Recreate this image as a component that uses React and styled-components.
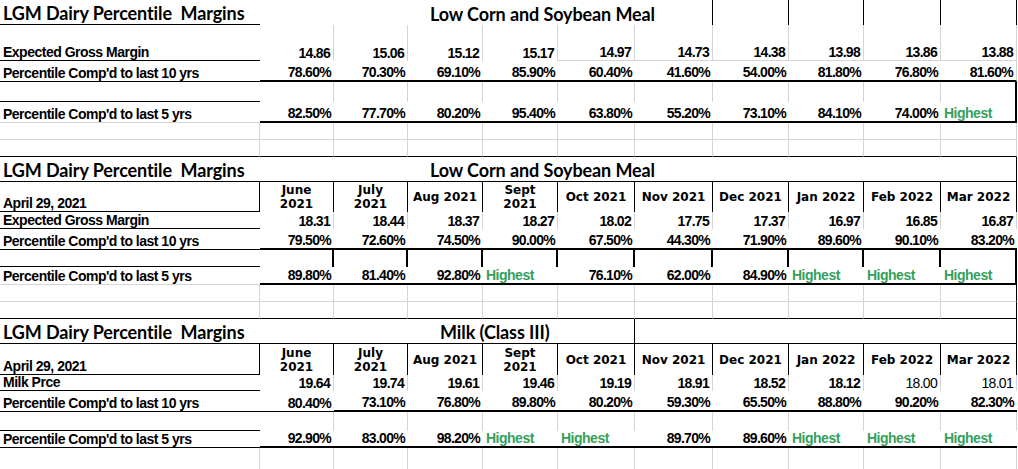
import React from 'react';
import styled, { createGlobalStyle } from 'styled-components';

// column widths of the worksheet, label column first
const COLS = [260, 74, 74, 75, 75, 77, 78, 76, 75, 77, 76];

const LINES = {
  g: '1px solid #d4d4d4',
  b: '1px solid #000',
  B: '2px solid #000',
  n: '0',
};

const TITLE = 'LGM Dairy Percentile\u00a0\u00a0Margins';
const P10 = "Percentile Comp'd to last 10 yrs";
const P5 = "Percentile Comp'd to last 5 yrs";

const title = (v) => ({ t: 'title', v });
const banner = (v, span, indent) => ({ t: 'banner', v, span, indent });
const month = (...lines) => ({ t: 'month', lines });
const light = (v) => ({ t: 'num', v, light: true });
const H = { t: 'high' };

const HEADER = [
  'April 29, 2021',
  month('June', '2021'),
  month('July', '2021'),
  month('Aug 2021'),
  month('Sept', '2021'),
  month('Oct 2021'),
  month('Nov 2021'),
  month('Dec 2021'),
  month('Jan 2022'),
  month('Feb 2022'),
  month('Mar 2022'),
];

const EMPTY = ['', '', '', '', '', '', '', '', '', '', ''];

const sections = [
  [
    { h: 25, r: 'nnnnnnbbbbb', b: 'bnnnnnnnnnn', cells: [title(TITLE), banner('Low Corn and Soybean Meal', 6, 167), '', '', '', ''] },
    { h: 36, r: 'ngggggggggg', b: 'bnnnngggggg', cells: ['Expected Gross Margin', '14.86', '15.06', '15.12', '15.17', '14.97', '14.73', '14.38', '13.98', '13.86', '13.88'] },
    { h: 21, r: 'nnnnnnnnnng', b: 'bBBBBBBBBBB', cells: [P10, '78.60%', '70.30%', '69.10%', '85.90%', '60.40%', '41.60%', '54.00%', '81.80%', '76.80%', '81.60%'] },
    { h: 20, r: 'ngggggggggB', b: 'bnnnnnnnnnn', cells: EMPTY },
    { h: 21, r: 'nnnnnnnnnnB', b: 'gBBBBBBBBBB', cells: [P5, '82.50%', '77.70%', '80.20%', '95.40%', '63.80%', '55.20%', '73.10%', '84.10%', '74.00%', H] },
    { h: 17, r: 'ggggggggggg', b: 'ggggggggggg', cells: EMPTY },
    { h: 17, r: 'ggggggggggg', b: 'bbbbbbbbbbb', cells: EMPTY },
  ],
  [
    { h: 25, r: 'nnnnnnnnnnb', b: 'bbbbbbbbbbb', cells: [title(TITLE), banner('Low Corn and Soybean Meal', 6, 167), '', '', '', ''] },
    { h: 30, r: 'bbbbbbbbbbb', b: 'bnnnnnnnnnn', cells: HEADER },
    { h: 17, r: 'ngggggggggg', b: 'bnnnnnnnnnn', cells: ['Expected Gross Margin', '18.31', '18.44', '18.37', '18.27', '18.02', '17.75', '17.37', '16.97', '16.85', '16.87'] },
    { h: 21, r: 'nnnnnnnnnnn', b: 'bBBBBBBBBBB', cells: [P10, '79.50%', '72.60%', '74.50%', '90.00%', '67.50%', '44.30%', '71.90%', '89.60%', '90.10%', '83.20%'] },
    { h: 17, r: 'nBBBBBBBBBB', b: 'bnnnnnnnnnn', cells: EMPTY },
    { h: 18, r: 'nnnnnnnnnnB', b: 'gBBBBBBBBBB', cells: [P5, '89.80%', '81.40%', '92.80%', H, '76.10%', '62.00%', '84.90%', H, H, H] },
    { h: 17, r: 'ggggggggggb', b: 'ggggggggggg', cells: EMPTY },
    { h: 17, r: 'ggggggggggb', b: 'bbbbbbbbbbb', cells: EMPTY },
  ],
  [
    { h: 25, r: 'nnnnnbnnnnb', b: 'bbbbbbbbbbb', cells: [title(TITLE), banner('Milk (Class III)', 5, 177), '', '', '', '', ''] },
    { h: 31, r: 'bbbbbbbbbbb', b: 'bnnnnnnnnnn', cells: HEADER },
    { h: 16, r: 'ngggggggggg', b: 'bnnnnnnnnnn', cells: ['Milk Prce', '19.64', '19.74', '19.61', '19.46', '19.19', '18.91', '18.52', '18.12', light('18.00'), light('18.01')] },
    { h: 21, r: 'nnnnnnnnnnn', b: 'bbBBBBBBBBB', cells: [P10, '80.40%', '73.10%', '76.80%', '89.80%', '80.20%', '59.30%', '65.50%', '88.80%', '90.20%', '82.30%'] },
    { h: 19, r: 'ngggggggggg', b: 'bnnnnnnnnnn', cells: EMPTY },
    { h: 17, r: 'nnnnnnnnnnn', b: 'bBBBBBBBBBB', cells: [P5, '92.90%', '83.00%', '98.20%', H, H, '89.70%', '89.60%', H, H, H] },
    { h: 21, r: 'ggggggggggg', b: 'nnnnnnnnnnn', cells: EMPTY },
  ],
];

const GlobalStyle = createGlobalStyle`
  html, body {
    margin: 0;
    padding: 0;
    background: #fff;
  }
  body {
    font-family: 'Liberation Sans', Arial, sans-serif;
    color: #000;
  }
`;

const Sheet = styled.div`
  width: 1018px;
  height: 469px;
  overflow: hidden;
  background: #fff;
`;

const Section = styled.div`
  display: grid;
  grid-template-columns: ${COLS.map((w) => w + 'px').join(' ')};
  grid-template-rows: ${(p) => p.$rows.map((h) => h + 'px').join(' ')};
`;

const Cell = styled.div`
  box-sizing: border-box;
  grid-column: span ${(p) => p.$span};
  display: flex;
  align-items: ${(p) => (p.$middle ? 'center' : 'flex-end')};
  justify-content: ${(p) => p.$align};
  padding: ${(p) => (p.$middle ? '0' : '0 3px')};
  border-right: ${(p) => LINES[p.$r]};
  border-bottom: ${(p) => LINES[p.$b]};
  white-space: nowrap;
  min-width: 0;
`;

const Title = styled.span`
  font-family: Lato, 'Open Sans', sans-serif;
  font-weight: 700;
  font-size: 18px;
  line-height: 21px;
  letter-spacing: -0.1px;
  padding-left: ${(p) => p.$indent || 0}px;
`;

const Label = styled.span`
  font-weight: 700;
  font-size: 14px;
  line-height: 16px;
  letter-spacing: -0.5px;
`;

const Value = styled.span`
  font-weight: ${(p) => (p.$light ? 400 : 700)};
  font-size: 14px;
  line-height: 16px;
  letter-spacing: -0.7px;
`;

const Highest = styled(Value)`
  color: #35a05c;
  letter-spacing: -0.5px;
`;

const Month = styled.span`
  font-family: 'DejaVu Sans', Verdana, sans-serif;
  font-weight: 700;
  font-size: 12px;
  line-height: 14px;
  text-align: center;
`;

function renderCell(cell, c) {
  if (cell === '' || cell == null) return { node: null, align: 'flex-start' };
  if (typeof cell === 'string') {
    if (c === 0) return { node: <Label>{cell}</Label>, align: 'flex-start' };
    return { node: <Value>{cell}</Value>, align: 'flex-end' };
  }
  switch (cell.t) {
    case 'title':
      return { node: <Title>{cell.v}</Title>, align: 'flex-start' };
    case 'banner':
      return { node: <Title $indent={cell.indent}>{cell.v}</Title>, align: 'flex-start' };
    case 'month':
      return {
        node: (
          <Month>
            {cell.lines.map((l, i) => (
              <React.Fragment key={i}>
                {i > 0 && <br />}
                {l}
              </React.Fragment>
            ))}
          </Month>
        ),
        align: 'center',
        middle: true,
      };
    case 'num':
      return { node: <Value $light={cell.light}>{cell.v}</Value>, align: 'flex-end' };
    case 'high':
      return { node: <Highest>Highest</Highest>, align: 'flex-start' };
    default:
      return { node: null, align: 'flex-start' };
  }
}

function Row({ row, ri }) {
  let c = 0;
  return row.cells.map((cell, i) => {
    const span = (cell && cell.span) || 1;
    const first = c;
    const last = c + span - 1;
    c += span;
    const { node, align, middle } = renderCell(cell, first);
    return (
      <Cell
        key={`${ri}-${i}`}
        $span={span}
        $r={row.r[last]}
        $b={row.b[first]}
        $align={align}
        $middle={middle}
      >
        {node}
      </Cell>
    );
  });
}

export default function App() {
  return (
    <>
      <GlobalStyle />
      <Sheet>
        {sections.map((rows, si) => (
          <Section key={si} $rows={rows.map((r) => r.h)}>
            {rows.map((row, ri) => (
              <Row key={ri} row={row} ri={ri} />
            ))}
          </Section>
        ))}
      </Sheet>
    </>
  );
}
